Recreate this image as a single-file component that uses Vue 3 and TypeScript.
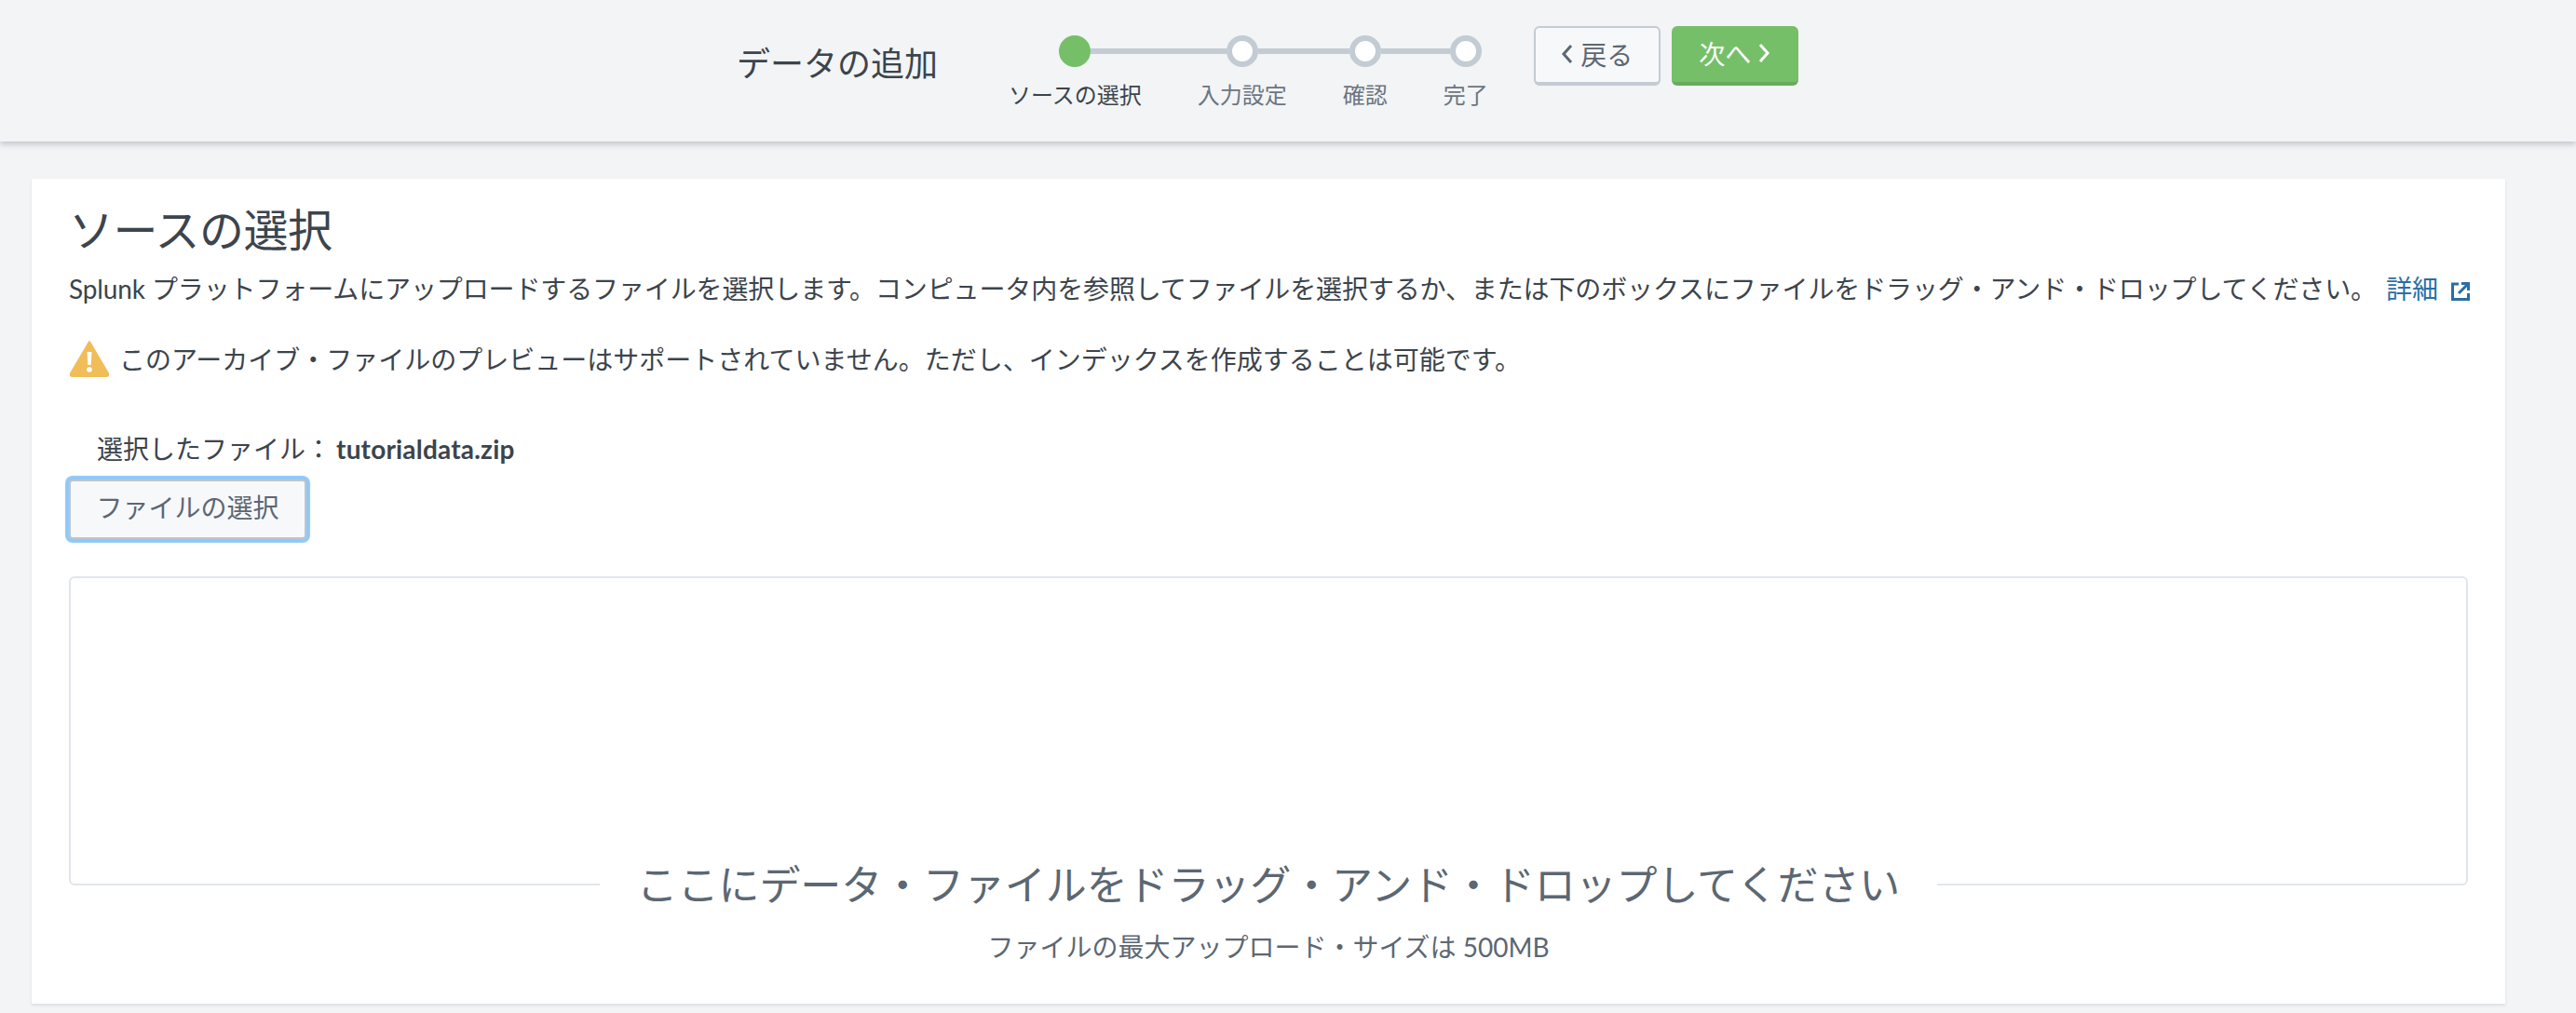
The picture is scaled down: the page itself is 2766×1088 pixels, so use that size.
<template>
  <div class="page">
    <!-- ウィザードのヘッダー -->
    <header class="wizard-header">
      <h1 class="wizard-title">データの追加</h1>
      <ol class="steps">
        <li
          v-for="(step, index) in steps"
          :key="step"
          class="step"
          :class="{ active: index === 0 }"
        >
          <div class="step-track">
            <span class="step-line" :class="{ hidden: index === 0 }"></span>
            <span class="step-dot"></span>
            <span class="step-line" :class="{ hidden: index === steps.length - 1 }"></span>
          </div>
          <span class="step-label">{{ step }}</span>
        </li>
      </ol>
      <div class="wizard-actions">
        <button class="btn btn-back" type="button">
          <svg width="13" height="22" viewBox="0 0 13 22" fill="none" stroke="currentColor" stroke-width="3">
            <path d="M11 2 L3 11 L11 20" />
          </svg>
          <span>戻る</span>
        </button>
        <button class="btn btn-next" type="button">
          <span>次へ</span>
          <svg width="13" height="22" viewBox="0 0 13 22" fill="none" stroke="currentColor" stroke-width="3">
            <path d="M2 2 L10 11 L2 20" />
          </svg>
        </button>
      </div>
    </header>

    <main class="card">
      <h2 class="card-title">ソースの選択</h2>
      <p class="description">
        Splunk プラットフォームにアップロードするファイルを選択します。コンピュータ内を参照してファイルを選択するか、または下のボックスにファイルをドラッグ・アンド・ドロップしてください。
        <a class="learn-more" href="#">
          詳細
          <svg width="20" height="20" viewBox="0 0 20 20" fill="none" stroke="currentColor" stroke-width="3">
            <path d="M8 2 H1.5 V18.5 H18.5 V12" />
            <path d="M8 12 L17 3" />
            <path d="M11 1.5 H18.5 V9" />
          </svg>
        </a>
      </p>

      <div class="warning">
        <svg width="44" height="40" viewBox="0 0 44 40">
          <path d="M22 2 L42 36 Q43 39 40 39 H4 Q1 39 2 36 Z" fill="#f0bd58" stroke="#f0bd58" stroke-width="2" stroke-linejoin="round" />
          <path d="M19.5 13 H24.5 L23.6 27 H20.4 Z" fill="#fff" />
          <circle cx="22" cy="32" r="2.8" fill="#fff" />
        </svg>
        <span>このアーカイブ・ファイルのプレビューはサポートされていません。ただし、インデックスを作成することは可能です。</span>
      </div>

      <div class="selected-file">
        <span>選択したファイル：</span>
        <strong>tutorialdata.zip</strong>
      </div>
      <button class="btn-file" type="button">ファイルの選択</button>

      <div class="dropzone"></div>
      <div class="drop-title">ここにデータ・ファイルをドラッグ・アンド・ドロップしてください</div>
      <div class="drop-note">ファイルの最大アップロード・サイズは 500MB</div>
    </main>
  </div>
</template>

<script setup lang="ts">
const steps: string[] = ['ソースの選択', '入力設定', '確認', '完了']
</script>

<style>
html,
body {
  margin: 0;
  background: #f2f4f5;
}
</style>

<style scoped>
.page {
  min-height: 1088px;
  background: #f2f4f5;
  color: #3c444d;
  font-family: Lato, "Noto Sans CJK JP", sans-serif;
  overflow: hidden;
}

.wizard-header {
  display: flex;
  align-items: flex-start;
  height: 152px;
  padding-left: 791px;
  box-sizing: border-box;
  background: #f2f4f5;
  box-shadow: 0 3px 6px rgba(70, 80, 105, 0.28);
}

.wizard-title {
  width: 262px;
  margin: 44px 0 0;
  font-size: 36px;
  line-height: 48px;
  font-weight: 400;
}

.steps {
  display: flex;
  margin: 38px 0 0;
  padding: 0;
  list-style: none;
}

.step {
  display: flex;
  flex-direction: column;
  align-items: stretch;
}

.step-track {
  display: flex;
  align-items: center;
  height: 34px;
}

.step-line {
  flex: 1;
  height: 6px;
  background: #c3cbd4;
}

.step-line.hidden {
  background: transparent;
}

.step-dot {
  width: 34px;
  height: 34px;
  box-sizing: border-box;
  border: 6px solid #c3cbd4;
  border-radius: 50%;
  background: #fff;
}

.step.active .step-dot {
  border-color: #76bf69;
  background: #76bf69;
}

.step-label {
  padding: 0 30px;
  margin-top: 13px;
  font-size: 24px;
  line-height: 34px;
  color: #6b7582;
  white-space: nowrap;
}

.step.active .step-label {
  color: #3c444d;
}

.wizard-actions {
  display: flex;
  gap: 12px;
  margin: 28px 0 0 19px;
}

.btn {
  display: flex;
  align-items: center;
  justify-content: center;
  gap: 8px;
  width: 136px;
  height: 64px;
  padding: 0 0 2px;
  box-sizing: border-box;
  border-radius: 6px;
  font-family: inherit;
  font-size: 28px;
}

.btn-back {
  border: 2px solid #c3cbd4;
  border-bottom-width: 4px;
  background: #f7f8fa;
  color: #5c6773;
}

.btn-next {
  border: 0;
  border-bottom: 4px solid #69ab5e;
  background: #76bf69;
  color: #fff;
}

.card {
  width: 2656px;
  height: 886px;
  margin: 40px 0 0 34px;
  padding: 31px 40px 0;
  box-sizing: border-box;
  background: #fff;
  box-shadow: 0 2px 3px rgba(60, 70, 90, 0.12);
}

.card-title {
  margin: 0;
  font-size: 48px;
  line-height: 48px;
  font-weight: 400;
  letter-spacing: -0.5px;
}

.description {
  margin: 21px 0 0;
  font-size: 28px;
  line-height: 36px;
  letter-spacing: -0.12px;
  white-space: nowrap;
}

.learn-more {
  margin-left: 3px;
  color: #2a6ea6;
  text-decoration: none;
}

.learn-more svg {
  margin-left: 7px;
  vertical-align: -2px;
}

.warning {
  display: flex;
  align-items: center;
  gap: 10px;
  height: 44px;
  margin-top: 35px;
  font-size: 28px;
}

.selected-file {
  display: flex;
  gap: 5px;
  margin-top: 57px;
  padding-left: 30px;
  font-size: 28px;
  line-height: 36px;
}

.selected-file strong {
  font-weight: 700;
  letter-spacing: 0.2px;
}

.btn-file {
  display: block;
  width: 255px;
  height: 64px;
  margin-top: 15px;
  padding: 0 0 6px;
  box-sizing: border-box;
  border: 2px solid #c0c5cc;
  border-radius: 4px;
  background: #f7f8fa;
  box-shadow: 0 0 1px 4px #90c8f8;
  color: #5c6773;
  font-family: inherit;
  font-size: 28px;
}

.dropzone {
  height: 332px;
  margin-top: 40px;
  box-sizing: border-box;
  border: 2px solid #e1e6eb;
  border-radius: 6px;
}

.drop-title {
  width: fit-content;
  margin: -23px auto 0;
  padding: 0 40px;
  background: #fff;
  color: #5c6773;
  font-size: 44px;
  line-height: 44px;
  letter-spacing: -0.1px;
  white-space: nowrap;
}

.drop-note {
  margin-top: 27px;
  color: #5c6773;
  font-size: 28px;
  line-height: 36px;
  text-align: center;
}
</style>
